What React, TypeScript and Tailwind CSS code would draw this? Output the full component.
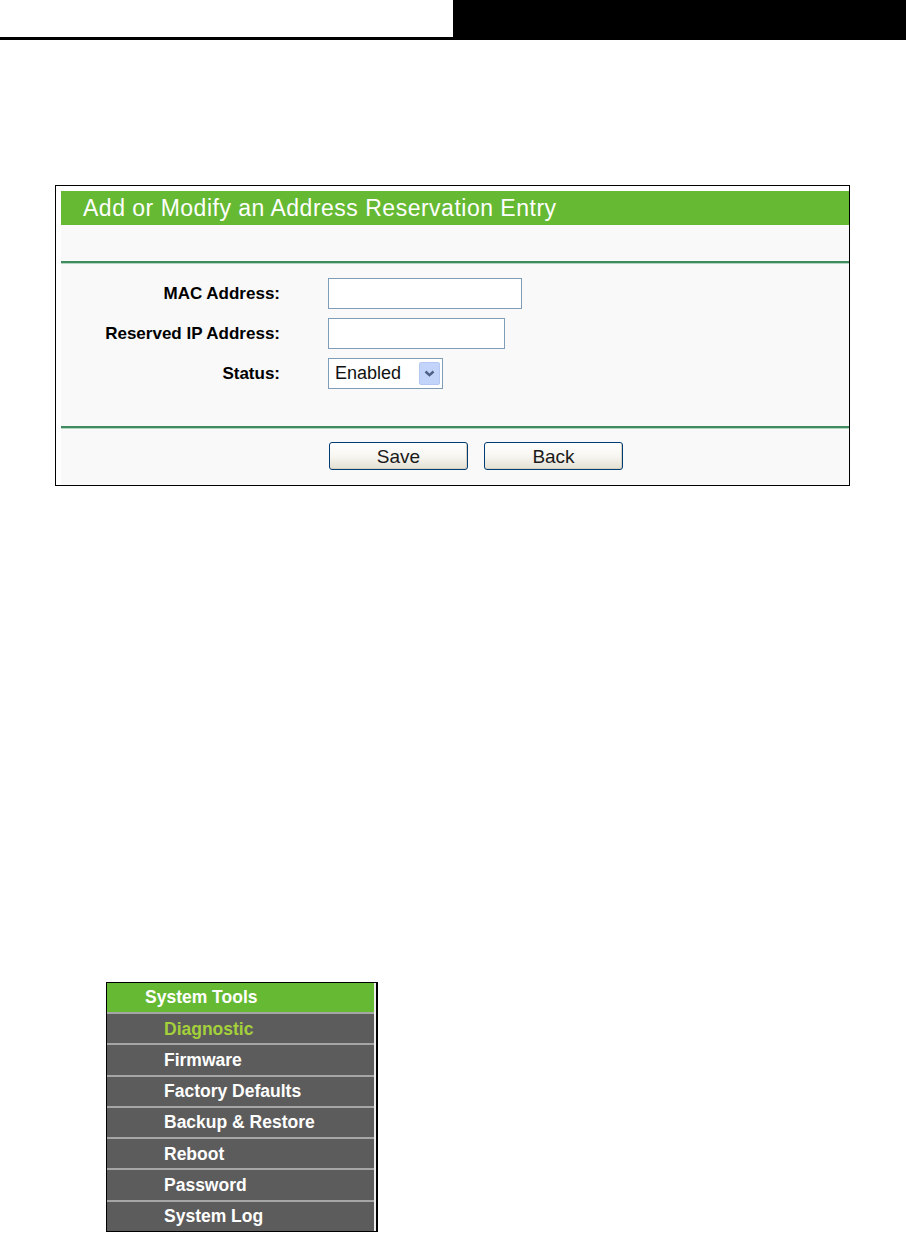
import React from 'react';

const FONT = { fontFamily: '"Liberation Sans", Arial, sans-serif' };

const menuItems = ['Diagnostic', 'Firmware', 'Factory Defaults', 'Backup & Restore', 'Reboot', 'Password', 'System Log'];

const FormRow: React.FC<{ label: string; children: React.ReactNode }> = ({ label, children }) => (
  <div className="flex items-center">
    <div className="w-[219px] text-right text-[17px] font-bold text-black">{label}</div>
    <div className="ml-[48px]">{children}</div>
  </div>
);

const XpButton: React.FC<{ label: string }> = ({ label }) => (
  <button className="h-[28px] w-[139px] rounded-[3px] border border-[#003c74] bg-linear-to-b from-white via-[#f7f6f1] to-[#e3e0d3] text-[19px] leading-none text-[#1a1a1a] shadow-[inset_-1px_-1px_0_#d6d0c0]">
    {label}
  </button>
);

const App: React.FC = () => {
  return (
    <div className="relative h-[1233px] w-[906px] overflow-hidden bg-white" style={FONT}>
      {/* page header strip */}
      <div className="flex h-[37px]">
        <div className="flex-1 bg-white" />
        <div className="w-[453px] bg-black" />
      </div>
      <div className="h-[3px] bg-black" />

      {/* reservation panel */}
      <div className="ml-[55px] mt-[145px] w-[795px] border border-black bg-white pl-[5px] pt-[5px]">
        <div className="flex h-[34px] items-center bg-[#66b933] pl-[22px] text-[23px] tracking-[0.5px] text-white">
          Add or Modify an Address Reservation Entry
        </div>
        <div className="bg-[#f9f9f9]">
          <div className="h-[36px]" />
          <div className="h-[3px] border-b border-[#b3d6c1] bg-[#3f8b5f]" />
          <div className="flex flex-col gap-[9px] pt-[14px]">
            <FormRow label="MAC Address:">
              <div className="h-[31px] w-[194px] border border-[#7f9db9] bg-white" />
            </FormRow>
            <FormRow label="Reserved IP Address:">
              <div className="h-[31px] w-[177px] border border-[#7f9db9] bg-white" />
            </FormRow>
            <FormRow label="Status:">
              <div className="flex h-[31px] w-[115px] items-center justify-between border border-[#7f9db9] bg-white pl-[6px] pr-[2px]">
                <span className="text-[18px] text-[#111]">Enabled</span>
                <span className="flex h-[23px] w-[21px] items-center justify-center rounded-[2px] border border-[#b4c8f2] bg-[#c3d4fb]">
                  <svg width="11" height="7" viewBox="0 0 11 7">
                    <path d="M1.5 1.5 L5.5 5.2 L9.5 1.5" fill="none" stroke="#4d6185" strokeWidth="2.4" />
                  </svg>
                </span>
              </div>
            </FormRow>
          </div>
          <div className="mt-[37px] h-[3px] border-b border-[#b3d6c1] bg-[#3f8b5f]" />
          <div className="flex gap-[16px] pb-[15px] pl-[268px] pt-[13px]">
            <XpButton label="Save" />
            <XpButton label="Back" />
          </div>
        </div>
      </div>

      {/* system tools menu */}
      <div className="ml-[106px] mt-[496px] flex w-[272px] border-y border-l border-r-2 border-black">
        <div className="w-[267px]">
          <div className="flex h-[29px] items-center bg-[#66b933] pl-[38px] text-[17.5px] font-bold text-white">
            System Tools
          </div>
          {menuItems.map((item, i) => (
            <div
              key={item}
              className={
                'flex h-[31.3px] items-center border-t-2 border-[#a6a6a6] bg-[#5c5c5c] pl-[57px] text-[17.5px] font-bold ' +
                (i === 0 ? 'text-[#a4d03a]' : 'text-white')
              }
            >
              {item}
            </div>
          ))}
        </div>
        <div className="w-[2px] bg-[#ececec]" />
      </div>
    </div>
  );
};

export default App;
